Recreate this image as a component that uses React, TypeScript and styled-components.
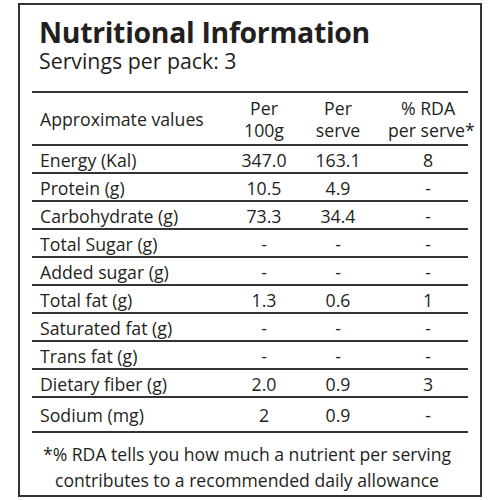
import styled, { createGlobalStyle } from "styled-components";

const GlobalStyle = createGlobalStyle`
    body {
        margin: 0;
        background: #ffffff;
        font-family: "Open Sans", "Liberation Sans", sans-serif;
        color: #231f20;
    }
`;

const Label = styled.div`
    margin: 3px 0 0 18px;
    width: 464px;
    height: 494px;
    border: 2px solid #333333;
    padding: 0 12px;
    box-sizing: border-box;
    display: flex;
    flex-direction: column;
`;

const Header = styled.header`
    padding: 12px 0 0 7px;
`;

const Title = styled.h1`
    margin: 0;
    font-size: 28.4px;
    line-height: 31px;
    font-weight: 700;
    letter-spacing: -0.3px;
`;

const Servings = styled.p`
    margin: 0;
    font-size: 21.3px;
    line-height: 26px;
`;

const Table = styled.div`
    margin-top: 17px;
    border-top: 2px solid #333333;
`;

const Row = styled.div<{ $tall?: boolean }>`
    display: grid;
    grid-template-columns: 1fr 72px 76px 92px;
    align-items: end;
    padding: ${(p) => (p.$tall ? "7px 0 6px" : "4px 0 2px")};
    border-bottom: 2px solid #333333;
    font-size: 17.7px;
    line-height: 20px;
`;

const HeadRow = styled(Row)`
    align-items: center;
    height: 51px;
    padding: 0;
    line-height: 22px;
`;

const Name = styled.div`
    padding-left: 8px;
    white-space: nowrap;
`;

const Cell = styled.div<{ $last?: boolean }>`
    text-align: center;
    padding-left: ${(p) => (p.$last ? 12 : 0)}px;
    white-space: nowrap;
`;

const Note = styled.p`
    margin: 8px 0 0;
    padding-right: 6px;
    font-size: 17.6px;
    line-height: 26px;
    text-align: center;
    white-space: nowrap;
`;

interface INutrient {
    name: string;
    per100: string;
    perServe: string;
    rda: string;
}

const nutrients: INutrient[] = [
    { name: "Energy (Kal)", per100: "347.0", perServe: "163.1", rda: "8" },
    { name: "Protein (g)", per100: "10.5", perServe: "4.9", rda: "-" },
    { name: "Carbohydrate (g)", per100: "73.3", perServe: "34.4", rda: "-" },
    { name: "Total Sugar (g)", per100: "-", perServe: "-", rda: "-" },
    { name: "Added sugar (g)", per100: "-", perServe: "-", rda: "-" },
    { name: "Total fat (g)", per100: "1.3", perServe: "0.6", rda: "1" },
    { name: "Saturated fat (g)", per100: "-", perServe: "-", rda: "-" },
    { name: "Trans fat (g)", per100: "-", perServe: "-", rda: "-" },
    { name: "Dietary fiber (g)", per100: "2.0", perServe: "0.9", rda: "3" },
    { name: "Sodium (mg)", per100: "2", perServe: "0.9", rda: "-" },
];

function App() {
    return (
        <>
            <GlobalStyle />
            <Label>
                <Header>
                    <Title>Nutritional Information</Title>
                    <Servings>Servings per pack: 3</Servings>
                </Header>
                <Table>
                    <HeadRow>
                        <Name>Approximate values</Name>
                        <Cell>Per<br />100g</Cell>
                        <Cell>Per<br />serve</Cell>
                        <Cell $last>% RDA<br />per serve*</Cell>
                    </HeadRow>
                    {nutrients.map((n, i) => (
                        <Row key={n.name} $tall={i === nutrients.length - 1}>
                            <Name>{n.name}</Name>
                            <Cell>{n.per100}</Cell>
                            <Cell>{n.perServe}</Cell>
                            <Cell $last>{n.rda}</Cell>
                        </Row>
                    ))}
                </Table>
                <Note>
                    *% RDA tells you how much a nutrient per serving<br />
                    contributes to a recommended daily allowance
                </Note>
            </Label>
        </>
    );
}

export default App;
